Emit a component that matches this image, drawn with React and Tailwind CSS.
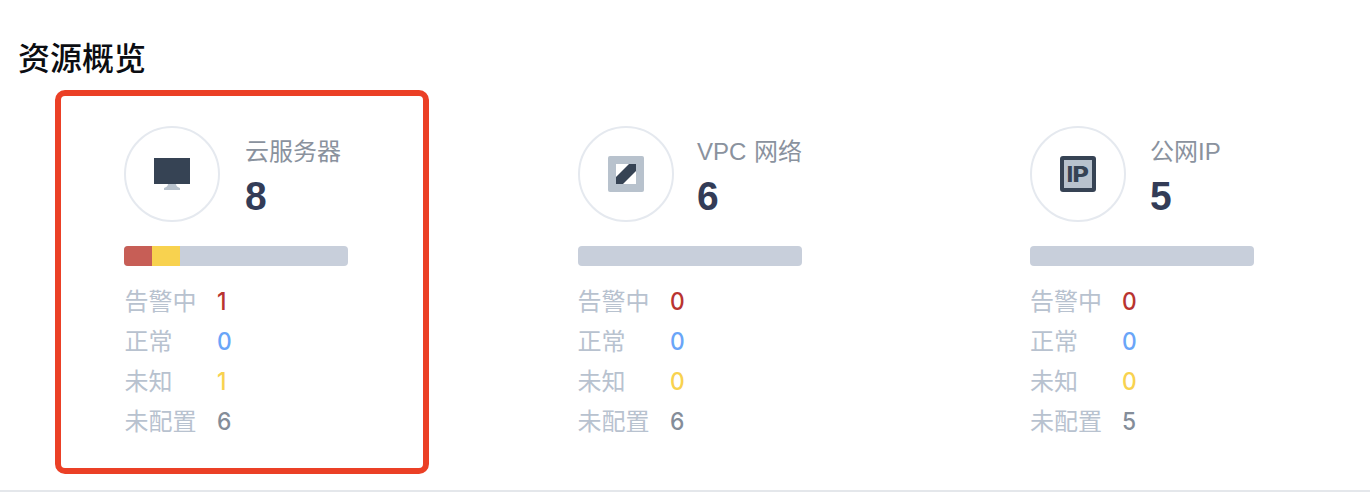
function ServerIcon() {
  return (
    <svg width="36" height="36" viewBox="0 0 36 36">
      <path d="M14 28h8c0 2 1.500 3.200 4 4v2H10v-2c2.500-.8 4-2 4-4z" fill="#b8c2cd" />
      <path d="M0 2h36v26H0z" fill="#364354" />
    </svg>
  );
}

function VpcIcon() {
  return (
    <svg width="36" height="36" viewBox="0 0 36 36">
      <rect width="36" height="36" rx="2" fill="#b8c2cd" />
      <path d="M8 8h20v20H8z" fill="#fff" />
      <path d="M21 8h7v7L15 28H8v-7z" fill="#364354" />
    </svg>
  );
}

function IpIcon() {
  return (
    <svg width="36" height="36" viewBox="0 0 36 36">
      <rect width="36" height="36" rx="3" fill="#364354" />
      <path d="M4 4h28v28H4z" fill="#b8c2cd" />
      <g fill="#364354" className="font-['Inter',sans-serif] text-[22px] font-extrabold">
        <text x="6.700" y="26">I</text>
        <text x="12.600" y="26" textLength="16.400" lengthAdjust="spacingAndGlyphs">P</text>
      </g>
    </svg>
  );
}

const resources = [
  { name: "云服务器", total: 8, icon: <ServerIcon />, alarm: 1, normal: 0, unknown: 1, unset: 6, frame: "ml-[55px] border-[#eb4026]", text: "ml-[25px]", rows: "pl-[0.5px]" },
  { name: "VPC 网络", total: 6, icon: <VpcIcon />, alarm: 0, normal: 0, unknown: 0, unset: 6, frame: "ml-20 border-transparent", text: "ml-[23px]", rows: "-ml-[0.5px]" },
  { name: "公网IP", total: 5, icon: <IpIcon />, alarm: 0, normal: 0, unknown: 0, unset: 5, frame: "ml-[78px] border-transparent", text: "ml-6", rows: "" },
];

function Row({ label, value, color }) {
  return (
    <div className="flex h-10 items-center">
      <dt className="w-[92px] text-[#b8c2cf]">{label}</dt>
      <dd className={`origin-left scale-x-95 font-['Inter',sans-serif] font-medium ${color}`}>{value}</dd>
    </div>
  );
}

function ResourceCard({ item }) {
  const share = (n) => ({ width: `${(n / item.total) * 100}%` });
  return (
    <section className={`h-[384px] w-[374px] shrink-0 rounded-[10px] border-[6px] pt-[30px] pl-[63px] ${item.frame}`}>
      <div className="flex h-24">
        <div className="flex size-24 items-center justify-center rounded-full border-2 border-[#e5e9ef]">{item.icon}</div>
        <div className={`pt-[9px] ${item.text}`}>
          <h2 className="h-[34px] text-2xl leading-[34px] [word-spacing:1px] whitespace-nowrap text-[#8a929e]">{item.name}</h2>
          <p className="origin-left scale-x-95 text-[41px] leading-[54px] font-bold text-[#333c57]">{item.total}</p>
        </div>
      </div>
      <div className="mt-6 flex h-5 w-56 overflow-hidden rounded bg-[#c8cfdb]">
        <div className="bg-[#c75e56]" style={share(item.alarm)} />
        <div className="bg-[#f8d24f]" style={share(item.unknown)} />
      </div>
      <dl className={`mt-4 text-2xl ${item.rows}`}>
        <Row label="告警中" value={item.alarm} color="text-[#b93430]" />
        <Row label="正常" value={item.normal} color="text-[#6aa5f8]" />
        <Row label="未知" value={item.unknown} color="text-[#f8d24f]" />
        <Row label="未配置" value={item.unset} color="text-[#848d99]" />
      </dl>
    </section>
  );
}

export default function App() {
  return (
    <main className="flex h-[492px] w-full flex-col overflow-hidden border-b-2 border-[#e4e7eb] bg-white font-['Liberation_Sans','Noto_Sans_CJK_SC',sans-serif]">
      <h1 className="mt-9 ml-[18px] h-[54px] text-[32px] leading-[46px] font-medium text-[#0b0d12]">资源概览</h1>
      <div className="flex">
        {resources.map((item) => (
          <ResourceCard key={item.name} item={item} />
        ))}
      </div>
    </main>
  );
}
